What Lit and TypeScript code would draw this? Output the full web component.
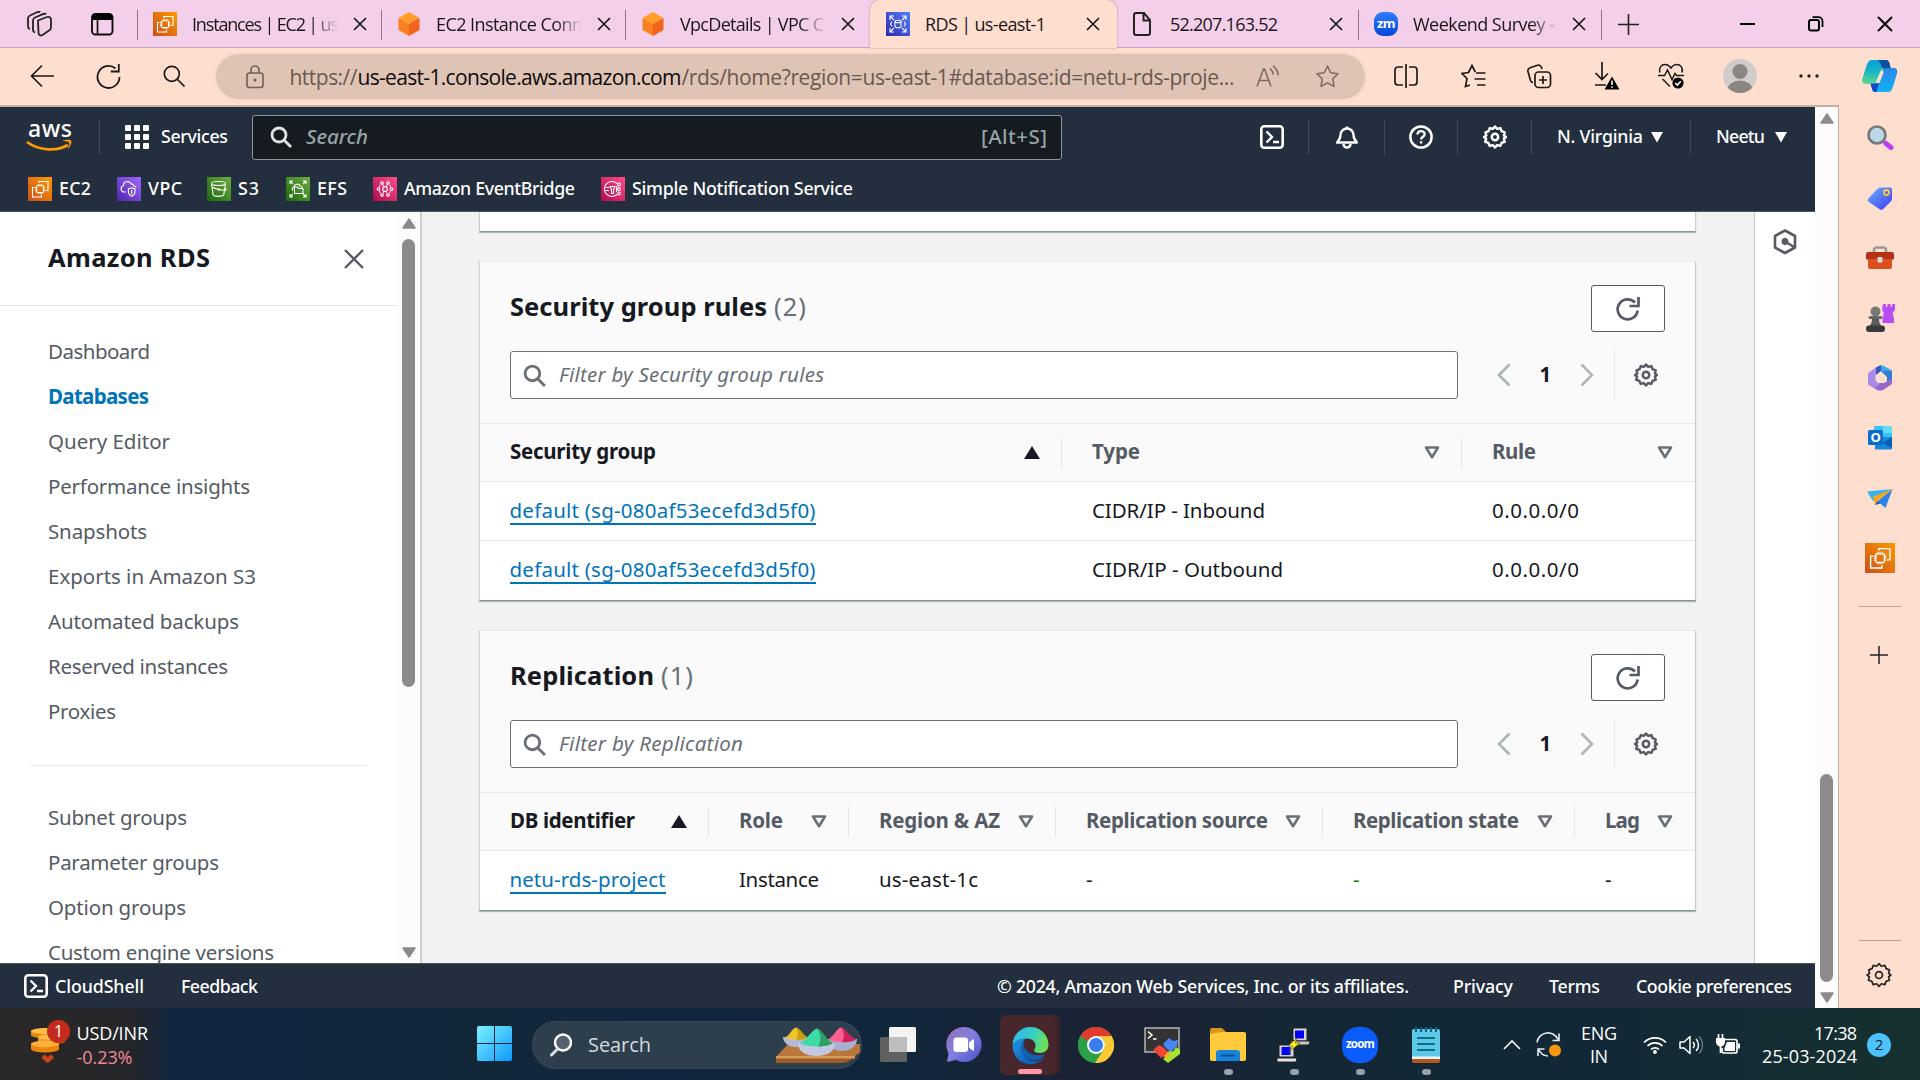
import { LitElement, html, css, svg, TemplateResult } from "lit";
import { customElement, property } from "lit/decorators.js";

/** A single line of text tracked so that it occupies exactly `w` pixels. */
@customElement("fit-text")
export class FitText extends LitElement {
  @property() text = "";
  @property({ type: Number }) w = 0;
  static styles = css`
    :host { display: inline-block; white-space: pre; flex: none; }
  `;
  updated() {
    const el = this.renderRoot.querySelector("span") as HTMLElement;
    el.style.letterSpacing = "0px";
    const natural = el.getBoundingClientRect().width;
    const n = Math.max(1, this.text.length - 1);
    el.style.letterSpacing = `${(this.w - natural) / n}px`;
    this.style.width = `${this.w}px`;
  }
  render() {
    return html`<span>${this.text}</span>`;
  }
}
const t = (text: string, w: number) => html`<fit-text .text=${text} .w=${w}></fit-text>`;

const icon = (w: number, h: number, body: TemplateResult, vb = `0 0 ${w} ${h}`) =>
  html`<svg class="ic" width=${w} height=${h} viewBox=${vb} fill="none">${body}</svg>`;

/* ---------- AWS service tiles ---------- */
const tile = (id: string, a: string, b: string, glyph: TemplateResult, s = 24) =>
  icon(s, s, svg`
    <defs><linearGradient id=${id} x1="0" y1="1" x2="1" y2="0"><stop offset="0" stop-color=${a}/><stop offset="1" stop-color=${b}/></linearGradient></defs>
    <rect width="24" height="24" fill="url(#${id})"/>
    <g stroke="#fff" stroke-width="1.1" fill="none">${glyph}</g>`, "0 0 24 24");
const ec2Glyph = svg`<path d="M11 6V4.500h9V13.500h-2.500M13.500 17.500v2.500H4.500v-9.500H6.500"/><rect x="8.700" y="8.700" width="6.800" height="6.800" rx=".6"/><path d="M10.500 8.500V7M12.100 8.500V7M13.800 8.500V7M10.500 17v-1.500M12.100 17v-1.500M13.800 17v-1.500M7 10.500h1.500M7 12.100h1.500M7 13.800h1.500M15.600 10.500h1.500M15.600 12.100h1.500M15.600 13.800h1.500" stroke-width=".9"/>`;
const ec2 = (id: string, s = 24) => tile(id, "#C8511B", "#FF9900", ec2Glyph, s);
const vpc = tile("gv", "#4D27AA", "#A166FF", svg`<path d="M8.800 15H7a3.200 3.200 0 0 1-.8-6.200 4.300 4.300 0 0 1 8.200-1.600c1-.7 2.500.2 2.300 1.600 1.300.2 2.200.8 2.600 1.700"/><path d="M14.700 10.800l3.300 1.200v3c0 2-1.300 3.200-3.300 4.200-2-1-3.300-2.200-3.300-4.200v-3zM14.700 13v4"/>`);
const s3 = tile("gs", "#1B660F", "#6CAE3E", svg`<ellipse cx="11.500" cy="6.500" rx="7" ry="2"/><path d="M4.500 6.500l1.700 11.500c1.500 1.800 9 1.800 10.500 0l1.800-11.500M5.200 10c2 1.500 5 2.300 8 2.800 3 .5 6 .8 6 0s-.7-1.300-1.500-1.800"/><circle cx="12" cy="12.500" r=".7"/>`);
const efs = tile("ge", "#1B660F", "#6CAE3E", svg`<path d="M4 7V4h3M4 4l3 3M20 7V4h-3M20 4l-3 3M4 17v3h3M4 20l3-3M20 17v3h-3M20 20l-3-3"/><path d="M8.500 16.500V10h3l1 1.500h4.500v5z"/><path d="M7 13.500c-1.500-1.500-.5-3.500 1-3.500.2-3 5-4 6-1 1.500-.3 2 1 2 2"/>`);
const eb = tile("gb", "#B0084D", "#FF4F8B", svg`<circle cx="12" cy="12" r="2.400"/><circle cx="9" cy="6" r="1.300"/><circle cx="15" cy="6" r="1.300"/><circle cx="9" cy="18" r="1.300"/><circle cx="15" cy="18" r="1.300"/><circle cx="18.500" cy="12" r="1.300"/><circle cx="5.500" cy="12" r="1.300"/><path d="M9.700 7.200l1.300 2.500M14.400 7.200l-1.300 2.500M9.700 16.800l1.300-2.500M14.400 16.800l-1.300-2.500M7.200 8l-1 2.500M16.800 8l1 2.500M6.300 13.500l1.200 2.800M17.800 13.500l-1.200 2.800" stroke-width=".9"/>`);
const sns = tile("gn", "#B0084D", "#FF4F8B", svg`<path d="M16 6.500a7.500 7.500 0 1 0 0 11"/><path d="M4.500 10.500H8M4.500 13.500H8M9 9.500h5l-1.500 3v4h-2v-4z"/><circle cx="18" cy="7.500" r="1.400"/><circle cx="18" cy="12" r="1.400"/><circle cx="18" cy="16.500" r="1.400"/><path d="M15 12h1.500M15.500 9v6"/>`);
const rds = tile("gr", "#2E27AD", "#527FFF", svg`<path d="M4 8V4h4M4.300 4.300L8 8M20 8V4h-4M19.700 4.300L16 8M4 16v4h4M4.300 19.700L8 16M20 16v4h-4M19.700 19.700L16 16"/><ellipse cx="12" cy="9.500" rx="3" ry="1.200"/><path d="M9 9.500v5c0 1.600 6 1.600 6 0v-5M6 9.500L4.500 12 6 14.500M18 9.500l1.500 2.500-1.500 2.500"/>`);

/* ---------- browser chrome ---------- */
const cube = icon(24, 24, svg`<path d="M12 0l10.500 6L12 12 1.500 6z" fill="#FF9D28"/><path d="M1.500 6L12 12v12L1.500 18z" fill="#F8801F"/><path d="M22.500 6L12 12v12l10.500-6z" fill="#F1641E"/>`);
const page = icon(24, 24, svg`<path d="M5 1h8l6 7v13a2 2 0 0 1-2 2H5a2 2 0 0 1-2-2V3a2 2 0 0 1 2-2zM12.500 1v7.500H19" stroke="#222" stroke-width="2"/>`);
const zm = html`<span class="zm">zm</span>`;
const cross = (s: number, c = "#111", sw = 1.6) => icon(s, s, svg`<path d="M1 1L${s - 1} ${s - 1}M${s - 1} 1L1 ${s - 1}" stroke=${c} stroke-width=${sw}/>`);
const star = "M11.500 1l3.200 6.800 7.300 1-5.300 5.200 1.300 7.400-6.500-3.600-6.500 3.600 1.300-7.400L1 8.800l7.300-1z";
const gear = (s: number, c: string, sw: number) =>
  icon(s, s, svg`<path d="M12 1.500l2.200 2.400 3.200-.8 1.200 3 3.100 1.200-.8 3.200L23 12l-2.100 1.600.8 3.200-3.100 1.100-1.200 3-3.200-.8L12 22.500l-2.200-2.400-3.200.8-1.200-3-3.100-1.100.8-3.200L1 12l2.300-1.500-.8-3.200 3.100-1.200 1.200-3 3 .8z" stroke=${c} stroke-width=${sw} stroke-linejoin="round"/><circle cx="12" cy="12" r="3.200" stroke=${c} stroke-width=${sw}/>`, "0 0 24 24");
const shell = icon(24, 24, svg`<rect x="1.300" y="1.300" width="21.400" height="21.400" rx="3" stroke="#fff" stroke-width="2.600"/><path d="M6.500 6.500L12 12l-5.500 5.500M13 17h6" stroke="#fff" stroke-width="2.400"/>`);
const lens = (s: number, c: string, sw: number) => icon(s, s, svg`<circle cx="9" cy="9" r="7" stroke=${c} stroke-width=${sw}/><path d="M14 14l7 7" stroke=${c} stroke-width=${sw}/>`, "0 0 22 22");

interface Tab { glyph: TemplateResult; title: string; w: number; fade?: boolean; active?: boolean; sep?: boolean; late?: boolean }
const tabs: Tab[] = [
  { glyph: ec2("t1"), title: "Instances | EC2 | us", w: 147, fade: true, sep: true },
  { glyph: cube, title: "EC2 Instance Conn", w: 147, fade: true, sep: true },
  { glyph: cube, title: "VpcDetails | VPC C", w: 144, fade: true, sep: true },
  { glyph: rds, title: "RDS | us-east-1", w: 121, active: true },
  { glyph: page, title: "52.207.163.52", w: 108, late: true },
  { glyph: zm, title: "Weekend Survey -", w: 142, fade: true, sep: true, late: true },
];

@customElement("browser-tabs")
export class BrowserTabs extends LitElement {
  static styles = css`
    :host { display: flex; height: 48px; background: #f3cfe9; box-shadow: inset 0 -1px #c7a4c0; font: 18px/24px "Open Sans", "Noto Sans", sans-serif; color: #1b171a; }
    .ic { display: block; flex: none; }
    .left { width: 137px; display: flex; align-items: center; padding-left: 27px; gap: 38px; box-sizing: border-box; }
    .tab { width: 244px; display: flex; align-items: center; position: relative; padding-left: 16px; box-sizing: border-box; }
    .tab.sep::before, .end::before { content: ""; position: absolute; left: 0; top: 10px; height: 30px; width: 1px; background: #8f7988; }
    .title { margin-left: 15px; width: 149px; margin-right: 12px; padding-bottom: 1px; }
    .fade { -webkit-mask-image: linear-gradient(90deg, #000 80%, transparent 98%); mask-image: linear-gradient(90deg, #000 80%, transparent 98%); }
    .active { background: #fedfcf; border-radius: 10px 10px 0 0; width: 247px; margin: 0 -2px 0 1px; z-index: 1; box-shadow: 0 0 2px #a4808f; }
    .late { width: 243px; }
    .late .title { width: 148px; margin-right: 11px; }
    .zm { width: 24px; height: 24px; border-radius: 9px; background: linear-gradient(#2f7bff, #0446d8); color: #fff; font: 700 13px/22px "Open Sans", sans-serif; text-align: center; letter-spacing: -0.500px; }
    .end { position: relative; flex: 1; display: flex; align-items: center; padding-left: 17px; }
    .win { margin-left: auto; display: flex; gap: 53px; padding-right: 27px; align-items: center; }
  `;
  render() {
    return html`
      <div class="left">
        ${icon(26, 26, svg`<path d="M11 9.500l9-3.500c2-.7 4 .6 4 2.500v8c0 1.500-.8 2.400-2 3l-6.500 4.500c-2 1.200-4-.1-4-2.200z" stroke="#222" stroke-width="1.800"/><path d="M8 21.500c-1.300-.4-2-1-2-2.500V9.500c0-1.500.8-2.500 2-3l8.500-3.700c1-.4 2-.2 2.700.4" stroke="#222" stroke-width="1.800"/><path d="M3 18c-1.300-.4-2-1-2-2.500V7.500c0-1.500.8-2.500 2-3L10.500 1c1-.4 2-.2 2.700.4" stroke="#222" stroke-width="1.800"/>`)}
        ${icon(23, 24, svg`<rect x="1" y="2" width="20.500" height="20.500" rx="3.500" stroke="#111" stroke-width="1.900"/><path d="M1 8V5a3.500 3.500 0 0 1 3.500-3.500h13.500A3.500 3.500 0 0 1 21.500 5v3z" fill="#000"/><path d="M6.500 8v14" stroke="#111" stroke-width="1.700"/>`)}
      </div>
      ${tabs.map((b) => html`
        <div class="tab ${b.sep ? "sep" : ""} ${b.active ? "active" : ""} ${b.late ? "late" : ""}">
          ${b.glyph}
          <div class="title ${b.fade ? "fade" : ""}">${t(b.title, b.w)}</div>
          ${cross(14)}
        </div>`)}
      <div class="end">
        ${icon(21, 21, svg`<path d="M10.500 0v21M0 10.500h21" stroke="#222" stroke-width="1.600"/>`)}
        <div class="win">
          ${icon(15, 15, svg`<path d="M0 7h15" stroke="#000" stroke-width="2"/>`)}
          ${icon(16, 16, svg`<rect x="1" y="4" width="10" height="10.500" rx="2" stroke="#000" stroke-width="2"/><path d="M4.500 1.200h6A4 4 0 0 1 14.500 5v6" stroke="#000" stroke-width="1.800"/>`)}
          ${cross(16, "#000", 1.900)}
        </div>
      </div>`;
  }
}

@customElement("browser-bar")
export class BrowserBar extends LitElement {
  static styles = css`
    :host { display: flex; align-items: center; height: 57px; background: #fedfcf; font: 21px/30px "Open Sans", "Noto Sans", sans-serif; color: #111; }
    .ic { display: block; flex: none; }
    .nav { width: 216px; padding-left: 30px; box-sizing: border-box; display: flex; gap: 42px; align-items: center; }
    .nav, .tools { margin-top: -1px; }
    .pill { width: 1149px; height: 45px; border-radius: 23px; background: #dfc4b6; box-shadow: 0 0 5px #f0cdbb; display: flex; align-items: center; padding: 0 26px 0 30px; box-sizing: border-box; color: #68594f; }
    .url { display: flex; margin-left: 25.500px; flex: 1; }
    .host { color: #0d0b0a; }
    .pill .gap { width: 36px; }
    .tools { display: flex; padding-left: 8px; flex: 1; }
    .tools > div { width: 66.800px; display: flex; justify-content: center; align-items: center; }
    .tools > .heart { width: 62px; }
    .tools > .who { width: 76px; }
    .tools > .more { width: 61px; }
    .avatar { width: 34px; height: 34px; border-radius: 50%; background: #cfccc9; overflow: hidden; }
    .copilot { margin-left: 7px; }
  `;
  render() {
    const s = "#1c1a19";
    return html`
      <div class="nav">
        ${icon(24, 24, svg`<path d="M24 12H1.500M12 1.500L1.500 12 12 22.500" stroke=${s} stroke-width="1.700"/>`)}
        ${icon(25, 25, svg`<path d="M23.500 13A11 11 0 1 1 19.500 4.500M22.800 0v7.500h-8" stroke=${s} stroke-width="1.800"/>`)}
        ${icon(22, 22, svg`<circle cx="8.800" cy="8.800" r="7.500" stroke=${s} stroke-width="1.700"/><path d="M14 14l7.500 7.500" stroke=${s} stroke-width="1.700"/>`)}
      </div>
      <div class="pill">
        ${icon(18, 24, svg`<rect x="1" y="8" width="16" height="14.500" rx="2.500" stroke="#6d5f57" stroke-width="1.600"/><path d="M5 8V5a4 4 0 0 1 8 0v3" stroke="#6d5f57" stroke-width="1.600"/><circle cx="9" cy="15" r="1.500" fill="#6d5f57"/>`)}
        <div class="url">
          ${t("https://", 68)}<span class="host">${t("us-east-1.console.aws.amazon.com", 324)}</span>${t("/rds/home?region=us-east-1#database:id=netu-rds-proje...", 553)}
        </div>
        ${icon(24, 24, svg`<path d="M1 21.500L7.500 4h1L15 21.500M3.300 15.500h9.500" stroke="#7a6b62" stroke-width="1.600"/><path d="M14 3.500a8 8 0 0 1 3 6M17 .8a12 12 0 0 1 5 9.500" stroke="#7a6b62" stroke-width="1.600"/>`)}
        <span class="gap"></span>
        ${icon(23, 23, svg`<path d=${star} stroke="#7a6b62" stroke-width="1.500" stroke-linejoin="round"/>`)}
      </div>
      <div class="tools">
        <div>${icon(24, 24, svg`<path d="M9 3H4a3 3 0 0 0-3 3v12a3 3 0 0 0 3 3h5M15 3h5a3 3 0 0 1 3 3v12a3 3 0 0 1-3 3h-5M12 0v24" stroke=${s} stroke-width="1.700"/>`)}</div>
        <div>${icon(25, 24, svg`<path d="M9 21l-4.500 1.500L6 14.500 1 9.500l6.500-1L11 1.500l3.300 6.500M15 9h9.500M13.500 15h11M16 21h8.500" stroke=${s} stroke-width="1.700"/>`)}</div>
        <div>${icon(25, 25, svg`<rect x="8" y="8" width="15.500" height="15.500" rx="3.500" stroke=${s} stroke-width="1.700"/><path d="M16 12v8M12 16h8M6 18.500c-1.500 0-2-.6-2.500-2L1 7.500c-.5-2 .2-3 2-3.700L10.500 1.200c2-.6 3 0 3.800 1.800l.7 2" stroke=${s} stroke-width="1.700"/>`)}</div>
        <div>${icon(26, 28, svg`<path d="M8 0v17M1.500 11L8 17.500 14 11.500M1 23h11" stroke=${s} stroke-width="1.700"/><path d="M18 14.500l7.500 13h-15z" fill="#000"/><path d="M18 18.500v4.500M18 24.300v1.500" stroke="#fff" stroke-width="1.500"/>`)}</div>
        <div class="heart">${icon(26, 26, svg`<path d="M1.800 9.500C.5 4.500 3.500 1.500 7 1.500c3 0 5 2 6 3.500 1-1.500 3-3.500 6-3.500s6.500 3 5 8M0 12.500h6.500l3-5.500 4.500 9.500 3-6 1.500 2H26M4.500 16l7.500 7.500" stroke=${s} stroke-width="1.500"/><circle cx="20" cy="20" r="5.600" fill="#000"/><path d="M17.300 20l2 2 3.500-3.800" stroke="#fff" stroke-width="1.600"/>`)}</div>
        <div class="who"><div class="avatar">${icon(34, 34, svg`<circle cx="17" cy="12.500" r="7.500" fill="#8b8682"/><ellipse cx="17" cy="31" rx="12.500" ry="9.500" fill="#8b8682"/>`)}</div></div>
        <div class="more">${icon(22, 6, svg`<circle cx="3" cy="3" r="1.700" fill="#222"/><circle cx="11" cy="3" r="1.700" fill="#222"/><circle cx="19" cy="3" r="1.700" fill="#222"/>`)}</div>
        <div class="copilot">${icon(36, 34, svg`
          <defs><linearGradient id="cp1" x1="0" y1="0" x2="0" y2="1"><stop offset="0" stop-color="#0a9fd8"/><stop offset=".5" stop-color="#19b6c4"/><stop offset="1" stop-color="#5fd98a"/></linearGradient>
          <linearGradient id="cp2" x1="0" y1="0" x2="0" y2="1"><stop offset="0" stop-color="#2a86e6"/><stop offset="1" stop-color="#12b3f5"/></linearGradient></defs>
          <path d="M10 1h14c2 0 3 1.500 3.500 3.500L29 10h-6c-3 0-4 1-5 3.500L15 22c-.8 2-2 3-4 3H4c-3 0-4.500-2-3.500-5.500l4-13C5.500 3 7 1 10 1z" fill="url(#cp1)"/>
          <path d="M16 1h8c2 0 3 1.500 3.500 3.500L29 10h-5c-3 0-4-1-5-4z" fill="#0c4f9c"/>
          <path d="M26 33H13c-2 0-2.500-1.500-3-3.500L8.500 24h4c3 0 4-1 5-3.500L20.500 12c.8-2 2-3 4-3h7c3 0 4.500 2 3.500 5.500l-4 13C30 31 29 33 26 33z" fill="url(#cp2)"/>
          <path d="M8.500 25h4c2.500 0 4-1 5-3.500l-3 11.500h-1.500c-2 0-2.500-1.500-3-3.500z" fill="#1747c9"/><path d="M18.500 12.500h3.500l-4.500 11.500h-4z" fill="#fedfcf"/>`)}</div>
      </div>`;
  }
}

/* ---------- scrollbars ---------- */
@customElement("scroll-track")
export class ScrollTrack extends LitElement {
  @property({ type: Number }) lead = 0;
  @property({ type: Number }) thumb = 0;
  static styles = css`
    :host { display: flex; flex-direction: column; align-items: center; width: 23px; background: #fcfcfc; padding: 6px 0 5px; box-sizing: border-box; flex: none; }
    .ic { display: block; flex: none; }
    .thumb { width: 13px; border-radius: 7px; background: #8b8b8b; flex: none; }
    .rest { flex: 1; }
  `;
  render() {
    return html`
      ${icon(14, 11, svg`<path d="M7 1l6 9H1z" fill="#8b8b8b" stroke="#8b8b8b" stroke-width="1.500" stroke-linejoin="round"/>`)}
      <div style="height:${this.lead}px;flex:none"></div>
      <div class="thumb" style="height:${this.thumb}px"></div>
      <div class="rest"></div>
      ${icon(14, 11, svg`<path d="M7 10l6-9H1z" fill="#8b8b8b" stroke="#8b8b8b" stroke-width="1.500" stroke-linejoin="round"/>`)}`;
  }
}

@customElement("aws-header")
export class AwsHeader extends LitElement {
  static styles = css`
    :host { display: block; height: 105px; background: #232f3e; color: #fff; font: 500 17.800px/24px "Noto Sans", "Open Sans", sans-serif; box-shadow: inset 0 -1px #4a5563; box-sizing: border-box; }
    .ic { display: block; flex: none; }
    fit-text { margin-bottom: 2px; }
    .top { display: flex; align-items: center; height: 60px; }
    .logo { width: 71px; padding-left: 28px; height: 34px; position: relative; }
    .logo b { display: block; font: 500 23px/17px "Noto Sans", sans-serif; height: 17px; }
    .logo .ic { position: absolute; left: 26px; top: 19px; }
    .sep { width: 1px; height: 34px; background: #414b58; flex: none; }
    .services { display: flex; align-items: center; gap: 12px; padding-left: 25px; width: 127px; }
    .search { width: 810px; height: 45px; box-sizing: border-box; background: #161a21; border: 1px solid #8a9999; border-radius: 3px; display: flex; align-items: center; padding: 0 14px 0 17px; color: #95a5a6; font-size: 20.500px; }
    .search i { margin-left: 14px; flex: 1; }
    .right { margin-left: auto; display: flex; align-items: center; height: 60px; }
    .cell { display: flex; align-items: center; justify-content: center; width: 72px; box-sizing: border-box; }
    .cell.first { width: 73px; }
    .cell.bell { width: 75px; }
    .cell.cog { width: 73px; }
    .cell.loc { width: 158px; justify-content: flex-start; padding-left: 25px; gap: 8px; }
    .cell.user { width: 124px; justify-content: flex-start; padding-left: 25px; gap: 10px; }
    .favs { display: flex; align-items: center; height: 42px; padding: 1px 0 0 28px; }
    .fav { display: flex; align-items: center; gap: 7px; }
  `;
  render() {
    const down = icon(12, 12, svg`<path d="M0 1h12L6 11.500z" fill="#fff"/>`);
    const favs: [TemplateResult, string, number, number][] = [
      [ec2("f1"), "EC2", 32, 89], [vpc, "VPC", 34, 90], [s3, "S3", 21, 79],
      [efs, "EFS", 30, 87], [eb, "Amazon EventBridge", 171, 228], [sns, "Simple Notification Service", 221, 300],
    ];
    return html`
      <div class="top">
        <div class="logo"><b>${t("aws", 44)}</b>
          ${icon(48, 14, svg`<path d="M1 3c12 9 30 9.500 41 3" stroke="#ff9900" stroke-width="2.800"/><path d="M36 2c4-2 8-1.500 9-.5s0 6-3.500 9c2-4 2-6 1.500-7s-4-1.500-7-1.500z" fill="#ff9900"/>`)}
        </div>
        <div class="sep"></div>
        <div class="services">
          ${icon(24, 24, svg`${[0, 9, 18].map((x) => [0, 9, 18].map((y) => svg`<rect x=${x} y=${y} width="6" height="6" rx="1" fill="#fff"/>`))}`)}
          ${t("Services", 67)}
        </div>
        <div class="search">${lens(22, "#dfe3e3", 2.8)}<i>${t("Search", 62)}</i>${t("[Alt+S]", 66)}</div>
        <div class="right">
          <div class="cell first">${shell}</div><div class="sep"></div>
          <div class="cell bell">${icon(24, 24, svg`<path d="M12 1.500v2M2 17.500c3-3 3.500-5 3.500-7.500a6.500 6.500 0 0 1 13 0c0 2.500.5 4.500 3.500 7.500z" stroke="#fff" stroke-width="2.400" stroke-linejoin="round"/><path d="M8.500 19a3.500 3.500 0 0 0 7 0" stroke="#fff" stroke-width="2.600"/>`)}</div><div class="sep"></div>
          <div class="cell">${icon(24, 24, svg`<circle cx="12" cy="12" r="10.600" stroke="#fff" stroke-width="2.500"/><path d="M8.500 9.500c0-4.500 7.200-4.500 7.200-.3 0 2.500-3.600 2.600-3.600 5.200M12.100 16.200v2.300" stroke="#fff" stroke-width="2.400"/>`)}</div><div class="sep"></div>
          <div class="cell cog">${gear(24, "#fff", 2.5)}</div><div class="sep"></div>
          <div class="cell loc">${t("N. Virginia", 86)}${down}</div><div class="sep"></div>
          <div class="cell user">${t("Neetu", 49)}${down}</div>
        </div>
      </div>
      <div class="favs">
        ${favs.map(([g, name, w, cell]) => html`<div class="fav" style="width:${cell}px">${g}${t(name, w)}</div>`)}
      </div>`;
  }
}

@customElement("side-nav")
export class SideNav extends LitElement {
  static styles = css`
    :host { display: flex; width: 422px; box-sizing: border-box; border-right: 2px solid #cbcfd0; background: #fff; overflow: hidden; flex: none; font: 20.500px/45px "Noto Sans", "Open Sans", sans-serif; color: #545b64; }
    .ic { display: block; flex: none; }
    .body { width: 397px; }
    .head { height: 94px; box-sizing: border-box; border-bottom: 1px solid #e3e8e8; display: flex; align-items: center; justify-content: space-between; padding: 0 33px 0 48px; font-weight: 700; font-size: 25.500px; color: #16191f; }
    .head fit-text { margin-bottom: 3px; }
    .list { padding: 23px 0 0 48px; }
    .item { height: 45px; }
    .on { color: #0073bb; font-weight: 700; }
    .rule { height: 1px; background: #e7e9ea; margin: 31px 30px 5px; }
    .list.second { padding-top: 24px; }
  `;
  render() {
    const a: [string, number][] = [["Dashboard", 102], ["Databases", 101], ["Query Editor", 122], ["Performance insights", 202], ["Snapshots", 99], ["Exports in Amazon S3", 208], ["Automated backups", 191], ["Reserved instances", 180], ["Proxies", 68]];
    const b: [string, number][] = [["Subnet groups", 139], ["Parameter groups", 171], ["Option groups", 138], ["Custom engine versions", 226]];
    const row = ([s, w]: [string, number]) => html`<div class="item ${s === "Databases" ? "on" : ""}">${t(s, w)}</div>`;
    return html`
      <div class="body">
        <div class="head">${t("Amazon RDS", 162)}${cross(20, "#545b64", 2.4)}</div>
        <div class="list">${a.map(row)}</div>
        <div class="rule"></div>
        <div class="list second">${b.map(row)}</div>
      </div>
      <scroll-track lead="10" thumb="448"></scroll-track>`;
  }
}

interface Col { name: string; w: number }
interface Cell { text: string; w: number; kind?: "link" | "ok" }

@customElement("data-card")
export class DataCard extends LitElement {
  @property() heading = "";
  @property({ type: Number }) hw = 0;
  @property() count = "";
  @property({ attribute: false }) filter: [string, number] = ["", 0];
  @property({ attribute: false }) cols: Col[] = [];
  @property({ attribute: false }) rows: Cell[][] = [];
  @property() template = "";
  static styles = css`
    :host { display: block; background: #fff; border: 1px solid #e4e8e8; border-left-color: #d0d5d5; border-right-color: #c5cbcb; border-bottom: 1px solid #879596; box-shadow: 0 1px 1px #aab7b8; box-sizing: border-box; width: 1217px; font: 20.500px/28px "Noto Sans", "Open Sans", sans-serif; color: #16191f; }
    .ic { display: block; flex: none; }
    .top { background: #fafafa; height: 162px; box-sizing: border-box; border-bottom: 1px solid #e6e9e9; padding: 23px 30px 0; }
    .title { display: flex; align-items: center; height: 47px; font-size: 25.500px; font-weight: 700; gap: 7px; line-height: 34px; }
    .title .n { color: #687078; font-weight: 400; flex: 1; }
    .title > fit-text, .title .n { margin-bottom: 5px; }
    .btn { width: 74px; height: 47px; box-sizing: border-box; border: 1px solid #545b64; border-radius: 3px; background: #fff; display: flex; align-items: center; justify-content: center; }
    .tools { display: flex; align-items: center; margin-top: 19px; height: 48px; }
    .filter { width: 948px; height: 48px; box-sizing: border-box; border: 1px solid #687078; border-radius: 3px; background: #fff; display: flex; align-items: center; gap: 13px; padding-left: 12px; color: #687078; font-style: italic; }
    .filter fit-text, .pager fit-text { margin-bottom: 2px; }
    .pager { display: flex; align-items: center; padding-left: 39px; gap: 28.500px; font-weight: 700; }
    .sep { width: 1px; background: #e3e6e6; height: 48px; margin: 0 19px 0 20px; }
    .head, .row { display: grid; }
    .head { height: 58px; background: #fafafa; box-sizing: border-box; border-bottom: 1px solid #e6e9e9; font-weight: 700; color: #545b64; align-items: center; }
    .head > div { height: 30px; display: flex; align-items: center; justify-content: space-between; padding: 0 21px 0 30px; border-left: 1px solid #e3e6e6; box-sizing: border-box; }
    .head > div:first-child { border-left-color: transparent; color: #16191f; padding-left: 29px; }
    .head > div:last-child { padding-right: 22px; }
    .head fit-text { margin-bottom: 3px; }
    .row { height: 59px; align-items: center; }
    .row:not(:last-child) { height: 58px; }
    .row + .row { border-top: 1px solid #e6e9e9; }
    .row > div { padding: 0 0 3px 31px; }
    .row > div:first-child { padding-left: 29.500px; }
    .link { color: #0073bb; border-bottom: 2px solid #0073bb; display: inline-block; line-height: 25px; height: 25px; vertical-align: middle; }
    .ok { color: #1d8102; }
  `;
  render() {
    const up = icon(16, 13, svg`<path d="M8 0l8 13H0z" fill="#16191f"/>`);
    const dn = icon(16, 13, svg`<path d="M2 1.500h12L8 11.200z" stroke="#687078" stroke-width="2.600" stroke-linejoin="round"/>`);
    const grid = `grid-template-columns:${this.template}`;
    return html`
      <div class="top">
        <div class="title">${t(this.heading, this.hw)}<span class="n">${t(this.count, 32)}</span>
          <div class="btn">${icon(26, 26, svg`<path d="M22.600 14.500A10 10 0 1 1 20 6.500" stroke="#545b64" stroke-width="2.700"/><path d="M23.500 1v9h-9" stroke="#545b64" stroke-width="2.700"/>`)}</div>
        </div>
        <div class="tools">
          <div class="filter">${lens(23, "#687078", 2.7)}${t(this.filter[0], this.filter[1])}</div>
          <div class="pager">
            ${icon(14, 24, svg`<path d="M12.500 1.500L2 12l10.500 10.500" stroke="#aab7b8" stroke-width="2.600"/>`)}
            ${t("1", 12)}
            ${icon(14, 24, svg`<path d="M1.500 1.500L12 12 1.500 22.500" stroke="#aab7b8" stroke-width="2.600"/>`)}
          </div>
          <div class="sep"></div>
          ${gear(24, "#545b64", 2.5)}
        </div>
      </div>
      <div class="head" style=${grid}>
        ${this.cols.map((c, i) => html`<div>${t(c.name, c.w)}${i ? dn : up}</div>`)}
      </div>
      ${this.rows.map((r) => html`<div class="row" style=${grid}>
        ${r.map((c) => html`<div><span class=${c.kind ?? ""}>${t(c.text, c.w)}</span></div>`)}
      </div>`)}`;
  }
}

@customElement("edge-sidebar")
export class EdgeSidebar extends LitElement {
  static styles = css`
    :host { display: flex; flex-direction: column; align-items: center; width: 81px; box-sizing: border-box; background: #fedfcf; flex: none; padding-top: 3px; }
    .ic { display: block; }
    .slot { height: 60px; display: flex; align-items: center; }
    .rule { width: 42px; height: 1px; background: #b9a396; }
    .rule.upper { margin-top: 18px; }
    .plus { height: 96px; display: flex; align-items: center; padding-right: 2px; }
    .gap { flex: 1; }
    .gear { height: 67px; display: flex; align-items: center; padding-right: 1px; }
    .o { font: 700 13px "Open Sans", sans-serif; fill: #fff; }
  `;
  render() {
    const icons = [
      icon(28, 26, svg`<circle cx="11" cy="10" r="8.500" fill="#bcd8e8" stroke="#777" stroke-width="2.600"/><path d="M17.500 17l3 2.500" stroke="#777" stroke-width="2.500"/><path d="M20 18.500l5 4" stroke="#c13cf5" stroke-width="5" stroke-linecap="round"/>`),
      icon(26, 26, svg`<defs><linearGradient id="tg" x1="0" y1="0" x2="1" y2="1"><stop offset="0" stop-color="#6fb0ff"/><stop offset="1" stop-color="#3a3cf0"/></linearGradient></defs><path d="M12 2h11c1.300 0 2 .8 2 2v9c0 1-.3 2-1 2.800l-8 8c-1 1-2.500 1-3.500 0l-11-7.500c-1-1-1-2.500 0-3.500l8-8.500c.7-.8 1.500-1.300 2.500-1.300z" transform="translate(0 .5)" fill="url(#tg)"/><circle cx="19.500" cy="7.500" r="2.500" fill="#5a6fe0" stroke="#ffc93c" stroke-width="1.800"/>`),
      icon(30, 24, svg`<path d="M9 7V4c0-1.500 1-2.500 2.500-2.500h7C20 1.500 21 2.500 21 4v3" stroke="#999" stroke-width="2.600"/><rect x="1" y="6" width="28" height="8" rx="2" fill="#b33314"/><path d="M3 13h24v8a2 2 0 0 1-2 2H5a2 2 0 0 1-2-2z" fill="#d9501c"/><rect x="12.500" y="11" width="5" height="5.500" rx="1" fill="#d8d8d8"/>`),
      icon(30, 30, svg`<path d="M18 1h2.800v2.500h1.700V1h3v2.500h1.700V1H30v6l-2.300 3 1.300 6v4H17.500v-4l1.300-6L17 7z" fill="#b94df5"/><circle cx="10.500" cy="8.500" r="5" fill="#777"/><rect x="3.500" y="13" width="14" height="3" rx="1.500" fill="#6a6a6a"/><path d="M7 15.500h7c0 4 1 6 3 8H4c2-2 3-4 3-8z" fill="#5a5a5a"/><rect x="1" y="22.500" width="19" height="6.500" rx="3" fill="#3a3a3a"/>`),
      icon(26, 26, svg`<path d="M9 2.500L13 .5h3l9 5v9l-6-4.500-5-4z" fill="#3fa3ea"/><path d="M25 6v12l-5 3v-9l-6-6z" fill="#2f7fd0"/><path d="M25 13.500V19l-9 6c-2 .8-4 .8-6 0l-6-4 4-3h9z" fill="#9667cc"/><path d="M10 25L1 19.500V8l8-5.500v11c0 3 2 5 4 5l-4 3.500z" fill="#a98ce8"/><path d="M9 2.500L14 0v6l-5 4z" fill="#3457b8"/><path d="M13 8l4.500 2.500v5L13 18l-4.500-2.500v-5z" fill="#fedfcf"/>`),
      icon(26, 26, svg`<rect x="7" y="1" width="18" height="12" rx="1.500" fill="#37c2f1"/><rect x="16" y="1" width="9" height="7" fill="#66dcfb"/><path d="M8 12h17v11a1.500 1.500 0 0 1-1.500 1.500H8z" fill="#1688dd"/><path d="M25 12v11l-9-5z" fill="#0a5fb0"/><rect x="1" y="5" width="15" height="15" rx="1.500" fill="#0b6fc9"/><text class="o" x="3.500" y="17.300">O</text>`),
      icon(26, 22, svg`<path d="M0 4.500L25.500 2 14 8.500 6 14z" fill="#31b4f2"/><path d="M25.500 2L18.500 21l-8-7z" fill="#2b82ea"/><path d="M25.500 2L6 9.500l2 8.500 3-4z" fill="#f5a623"/><path d="M8 18l2.500-4 3.500 2.600z" fill="#1b5fb8"/>`),
      ec2("sb", 30),
    ];
    return html`
      ${icons.map((i) => html`<div class="slot">${i}</div>`)}
      <div class="rule upper"></div>
      <div class="plus">${icon(18, 18, svg`<path d="M9 0v18M0 9h18" stroke="#222" stroke-width="1.500"/>`)}</div>
      <div class="gap"></div>
      <div class="rule"></div>
      <div class="gear">${gear(26, "#2a2523", 1.6)}</div>`;
  }
}

@customElement("task-bar")
export class TaskBar extends LitElement {
  static styles = css`
    :host { display: flex; height: 72px; align-items: center; background: linear-gradient(90deg, #2a2727 0, #252629 130px, #13263f 170px, #12263e 380px, #122838 480px, #10263e 640px, #12263a 900px, #1c2233 1130px, #132735 1300px, #122836 1600px, #16302f 1920px); color: #fff; font: 18px/24px "Open Sans", "Noto Sans", sans-serif; }
    .ic { display: block; flex: none; }
    .weather { width: 461px; display: flex; padding-left: 30px; box-sizing: border-box; position: relative; }
    .weather .txt { margin-left: 6.500px; display: flex; flex-direction: column; padding-top: 2px; }
    .red { color: #f08a98; }
    .badge { position: absolute; left: 47px; top: 1px; width: 23px; height: 23px; border-radius: 50%; background: #c42b1c; text-align: center; font-size: 16px; line-height: 22px; }
    .start { width: 71px; display: flex; padding-left: 16px; box-sizing: border-box; }
    .search { width: 330px; height: 48px; border-radius: 24px; margin-top: 2px; background: #2d3e4d; box-shadow: inset 0 0 0 1px #364655; display: flex; align-items: center; padding-left: 18px; box-sizing: border-box; font-size: 20px; color: #d5d9dc; overflow: hidden; }
    .search fit-text { margin: 0 125px 0 16px; }
    .app { width: 66px; height: 60px; display: flex; justify-content: center; align-items: center; position: relative; z-index: 0; }
    .apps { display: flex; padding: 2px 0 0 3px; }
    .run::after { content: ""; position: absolute; bottom: 0; width: 9px; height: 6px; border-radius: 3px; background: #98a0a8; }
    .cur::before { content: ""; position: absolute; inset: 0 3px; border-radius: 6px; background: #47272c; box-shadow: inset -4px 0 #3a2229; z-index: -1; }
    .cur::after { width: 24px; height: 5px; background: #ff99a4; bottom: 1px; }
    .zoom { width: 36px; height: 36px; border-radius: 16px; background: #0b5cff; font: 700 11.500px/34px "Open Sans", sans-serif; text-align: center; letter-spacing: -0.800px; }
    .tray { margin-left: auto; display: flex; align-items: center; padding-top: 2px; }
    .col { display: flex; flex-direction: column; align-items: center; line-height: 23px; }
    .tray .chev { margin-right: 15px; }
    .clock { align-items: flex-end; margin-top: -1px; }
    .tray .lang { margin: 0 26px 0 19px; }
    .tray .sys { display: flex; gap: 12px; margin-right: 21px; }
    .two { width: 24px; height: 24px; border-radius: 50%; background: #4cc2ff; color: #0b1a26; font-size: 15px; text-align: center; margin: 0 29px 0 10px; line-height: 23px; }
  `;
  render() {
    return html`
      <div class="weather">
        ${icon(40, 48, svg`
          <path d="M1 12v4a13 3.200 0 0 0 27 0v-4z" fill="#e8890f"/><ellipse cx="14.500" cy="12" rx="13.500" ry="3" fill="#ffbe45"/>
          <path d="M8 18v4a13 3.200 0 0 0 27 0v-4z" fill="#f09a20"/><ellipse cx="21.500" cy="18" rx="13.500" ry="3" fill="#ffb84a"/>
          <path d="M1 25v5a14 3.500 0 0 0 28 0v-5z" fill="#ea840c"/><ellipse cx="15" cy="25" rx="14" ry="3.200" fill="#ffb03a"/>
          <path d="M13 37l4.700 4.300L22.500 37" stroke="#cf4317" stroke-width="4.500" stroke-linejoin="round"/>`)}
        <span class="badge">1</span>
        <div class="txt">${t("USD/INR", 71.5)}<span class="red">${t("-0.23%", 56)}</span></div>
      </div>
      <div class="start">${icon(36, 36, svg`<defs><linearGradient id="wn" gradientUnits="userSpaceOnUse" x1="0" y1="0" x2="36" y2="36"><stop offset="0" stop-color="#7df2ff"/><stop offset="1" stop-color="#0a95ff"/></linearGradient></defs><path d="M0 2a2 2 0 0 1 2-2h15v17H0zM18 0h15a2 2 0 0 1 2 2v15H18zM0 18h17v17H2a2 2 0 0 1-2-2zM18 18h17v15a2 2 0 0 1-2 2H18z" fill="url(#wn)"/>`)}</div>
      <div class="search">
        ${icon(22, 24, svg`<circle cx="13" cy="9.500" r="8" stroke="#fff" stroke-width="2.400" fill="#53626e"/><path d="M7.500 16L1.500 22" stroke="#dfe3e6" stroke-width="3" stroke-linecap="round"/>`)}
        ${t("Search", 63)}
        ${icon(84, 37, svg`
          <path d="M12 17h72v8l-6 5H0z" fill="#b9773b"/><path d="M0 29h79c-3 4-7 6.500-12 7H0z" fill="#9c5c28"/><path d="M0 29h79v2.500H0z" fill="#d79a58"/>
          <path d="M7 10h26c0 6-6 10-13 10S7 16 7 10z" fill="#b4b9d6"/><path d="M9 10.500c5-2 7-9.500 11-10 4 .5 7 8 12 10-4 3-19 3-23 0z" fill="#edc52b"/><path d="M20 .5c4 .5 7 8 12 10-3 2-8 2.300-12 2.300 3-4 2-9 0-12.300z" fill="#c99d12"/>
          <path d="M51 12h30c0 7-6 12-15 12s-15-5-15-12z" fill="#a9afd0"/><path d="M52 12.500c5-2 9-11.500 13-12 4 .5 9 10 15 12-5 3.500-23 3.500-28 0z" fill="#ff5f93"/><path d="M65 .5c4 .5 9 10 15 12-4 2.500-9 2.700-14 2.700 3-5 2-11-1-14.700z" fill="#cf1f5c"/>
          <path d="M22 16h37c0 8-7 13-18.500 13S22 24 22 16z" fill="#c3c8e2"/><path d="M24 16c7-2.500 12-14 17-14.500C46 2 50 13.500 57 16c-5 4.500-28 4.500-33 0z" fill="#3ddba6"/><path d="M41 1.500C46 2 50 13.500 57 16c-4 3-10 3.400-15 3.400 4-6 3-13-1-17.900z" fill="#2f9f60"/>`)}
      </div>
      <div class="apps">
        <div class="app">${icon(36, 36, svg`<rect x="0" y="10" width="27" height="25" rx="1.500" fill="#616161"/><rect x="9" y="0" width="27" height="25" rx="1.500" fill="#f4f4f4"/><path d="M9 10h18v15H9z" fill="#bdbdbd"/>`)}</div>
        <div class="app">${icon(36, 36, svg`<defs><linearGradient id="ch" x1="0" y1="0" x2="1" y2="1"><stop offset="0" stop-color="#9a6fb8"/><stop offset=".5" stop-color="#7f7fe0"/><stop offset="1" stop-color="#4a4cc8"/></linearGradient></defs><path d="M18 0a17.500 17.500 0 1 1-8 33L1 35l1.500-9A17.500 17.500 0 0 1 18 0z" fill="url(#ch)"/><rect x="7.500" y="10.500" width="14.500" height="14.500" rx="3" fill="#fff"/><path d="M23.500 15.500l4-3v11l-4-3z" fill="#fff" stroke="#fff" stroke-linejoin="round"/>`)}</div>
        <div class="app run cur">${icon(37, 37, svg`<defs><linearGradient id="e1" x1="0" y1="0" x2="1" y2=".3"><stop offset="0" stop-color="#2fb4ef"/><stop offset=".6" stop-color="#35d0c4"/><stop offset="1" stop-color="#6be05a"/></linearGradient><linearGradient id="e2" x1="0" y1="0" x2="1" y2="1"><stop offset="0" stop-color="#1d96e4"/><stop offset="1" stop-color="#0b4fa8"/></linearGradient></defs>
          <path d="M.5 18A18 18 0 0 1 36.500 18c0 5-4 8-8.500 8-4 0-6-1-6-2.500 0-1 1.500-2 1.500-5 0-4-3.500-7-9-7C8 11.500 2.500 14 .5 18z" fill="url(#e1)"/>
          <path d="M.5 18.500C2 14 8 11 14 11.500c-3 2-5 6-4.500 10.500.7 7 6.500 12 13 12 3.500 0 7-1 10-3.500A18 18 0 0 1 .5 18.500z" fill="url(#e2)"/>
          <path d="M14 11.500c-3.500 2.500-2.500 9 1 12.500 4 4 11 5.500 18.500 3-3 5-8 6-11.500 6-6.500 0-12-4.500-12.500-11 0-5 1.500-8 4.500-10.500z" fill="#0f5fb5"/>`)}</div>
        <div class="app">${icon(36, 36, svg`<circle cx="18" cy="18" r="18" fill="#2aa148"/><path d="M2.400 9A18 18 0 0 1 33.600 9H18a9 9 0 0 0-8 5z" fill="#e33b2e"/><path d="M2.400 9l7.800 13.500A9 9 0 0 0 18 27l-4 8.500A18 18 0 0 1 2.400 9z" fill="#2aa148"/><path d="M33.600 9A18 18 0 0 1 17 36l8.800-13.500A9 9 0 0 0 18 9z" fill="#fcc934"/><circle cx="18" cy="18" r="9" fill="#fff"/><circle cx="18" cy="18" r="7" fill="#3b7ded"/>`)}</div>
        <div class="app">${icon(37, 36, svg`<rect x="1" y="1" width="34" height="24" fill="#333" stroke="#b5b5b5" stroke-width="1.500"/><path d="M4 4.500l4 3.500-4 3.500M9 12h3.500" stroke="#fff" stroke-width="1.600"/><path d="M19 17l6-6 4 3 5-1-1 6-6 6-4-3-2-2z" fill="#4a86f7"/><path d="M9 23l6-5 4 2 5 5-3 4-4 2z" fill="#f0453a"/><path d="M21 30l5-6 3 1 3-5 4 3v4L24 36l-5-4z" fill="#a6e22e"/><path d="M20 29l4-4 2 3-4 4z" fill="#f5b51e"/>`)}</div>
        <div class="app run">${icon(37, 34, svg`<path d="M0 2a2 2 0 0 1 2-2h10l4 4h-4l-2 4H0z" fill="#d9961a"/><path d="M0 6l12-2h22a2 2 0 0 1 2 2v25a2 2 0 0 1-2 2H2a2 2 0 0 1-2-2z" fill="#ffcb3d"/><path d="M6 33V25a3 3 0 0 1 3-3h18a3 3 0 0 1 3 3v8z" fill="#1683d8"/><path d="M11 27.500h14" stroke="#0b4f9c" stroke-width="2"/>`)}</div>
        <div class="app run">${icon(36, 36, svg`<rect x="17" y="1" width="14" height="13" fill="#d6d6d6" stroke="#222"/><rect x="19" y="3.500" width="9" height="8" fill="#0000f5"/><path d="M15 14h19l-1 4H15z" fill="#c8c8c8" stroke="#222"/><rect x="3" y="18" width="15" height="12" fill="#d6d6d6" stroke="#222"/><rect x="5.500" y="20" width="9" height="8" fill="#0000f5"/><path d="M1 31h20l-1 4H1z" fill="#e4e4e4" stroke="#222"/><path d="M21 11l-9 8h5l-4 6 11-9h-5z" fill="#ffef1f" stroke="#5a5200" stroke-width=".6"/>`)}</div>
        <div class="app run"><span class="zoom">zoom</span></div>
        <div class="app run">${icon(30, 36, svg`<rect x="1" y="2" width="28" height="30" rx="2" fill="#5cc8e4"/><path d="M1 30h28v4a2 2 0 0 1-2 2H3a2 2 0 0 1-2-2z" fill="#b8561a"/><path d="M1 29.500h28v2.500H1z" fill="#e9f6fa"/><path d="M6 11h18M6 17h18M6 23h18" stroke="#0e6f92" stroke-width="2"/><path d="M5 0v5M10 0v5M15 0v5M20 0v5M25 0v5" stroke="#0e5f80" stroke-width="2"/>`)}</div>
      </div>
      <div class="tray">
        <span class="chev">${icon(18, 10, svg`<path d="M1 9l8-8 8 8" stroke="#fff" stroke-width="1.600"/>`)}</span>
        ${icon(26, 26, svg`<path d="M1 10.500A11 11 0 0 1 22 7.500M23 1.500v7h-6.500M12 24A11 11 0 0 1 2.500 17M2 24v-7h6.500" stroke="#e6e9eb" stroke-width="1.600"/><circle cx="19" cy="18.500" r="6" fill="#f7950a"/>`)}
        <div class="col lang">${t("ENG", 36)}${t("IN", 18)}</div>
        <div class="sys">
          ${icon(24, 24, svg`<path d="M1 9.500a15.500 15.500 0 0 1 22 0M4.500 13a10.500 10.500 0 0 1 15 0M8 16.500a5.700 5.700 0 0 1 8 0" stroke="#fff" stroke-width="1.700"/><circle cx="12" cy="19" r="1.900" fill="#fff"/>`)}
          ${icon(24, 24, svg`<path d="M1 9h4l6-5.500v17L5 15H1z" stroke="#fff" stroke-width="1.500" stroke-linejoin="round"/><path d="M14 9a4.500 4.500 0 0 1 0 6M17 6a8.500 8.500 0 0 1 0 12" stroke="#fff" stroke-width="1.500"/><path d="M20 3.500a12 12 0 0 1 0 17" stroke="#667682" stroke-width="1.500"/>`)}
          ${icon(26, 24, svg`<path d="M8.500 6.500H20a2 2 0 0 1 2 2V18a2 2 0 0 1-2 2H9a2 2 0 0 1-2-2v-3" stroke="#fff" stroke-width="1.700"/><path d="M12 9h8v9H9.500v-3z" fill="#fff"/><path d="M23 10.500h2v5h-2zM1 5h9v4a4.500 4.500 0 0 1-9 0z" fill="#fff"/><path d="M3.500 5V1M7.500 5V1M5.500 13v7" stroke="#fff" stroke-width="1.700"/>`)}
        </div>
        <div class="col clock">${t("17:38", 43)}${t("25-03-2024", 95)}</div>
        <span class="two">2</span>
      </div>`;
  }
}

@customElement("app-root")
export class AppRoot extends LitElement {
  static styles = css`
    :host { display: flex; flex-direction: column; width: 1920px; height: 1080px; overflow: hidden; background: #fedfcf; }
    .ic { display: block; flex: none; }
    .view { display: flex; flex: 1; min-height: 0; }
    .frame { display: flex; border-top: 2px solid #c9ada0; border-right: 1px solid #c9ada0; width: 1839px; box-sizing: border-box; flex: none; }
    .page { width: 1815px; display: flex; flex-direction: column; }
    .middle { flex: 1; display: flex; min-height: 0; overflow: hidden; }
    .main { flex: 1; background: #f1f3f3; padding-left: 57px; overflow: hidden; display: flex; flex-direction: column; gap: 29px; }
    .stub { height: 20px; width: 1217px; box-sizing: border-box; background: #fff; flex: none; border: 1px solid #c9cfcf; border-top: 0; border-bottom: 1px solid #879596; box-shadow: 0 1px 1px #aab7b8; }
    .help { width: 61px; box-sizing: border-box; border-left: 1px solid #c4c9ca; background: #fff; padding: 17px 0 0 18px; flex: none; }
    .foot { height: 45px; background: #232f3e; box-shadow: inset 0 1px #4a5563; display: flex; align-items: center; color: #fff; font: 500 17.800px/24px "Noto Sans", "Open Sans", sans-serif; padding: 0 23px 0 24px; flex: none; box-sizing: border-box; }
    .cs { display: flex; gap: 7px; align-items: center; margin-right: 37px; }
    .legal { margin-left: auto; display: flex; }
    .legal > :nth-child(1) { margin-right: 44px; }
    .legal > :nth-child(2), .legal > :nth-child(3) { margin-right: 36px; }
  `;
  render() {
    const sg: Cell = { text: "default (sg-080af53ecefd3d5f0)", w: 306, kind: "link" };
    return html`
      <browser-tabs></browser-tabs>
      <browser-bar></browser-bar>
      <div class="view">
        <div class="frame">
          <div class="page">
            <aws-header></aws-header>
            <div class="middle">
              <side-nav></side-nav>
              <div class="main">
                <div class="stub"></div>
                <data-card heading="Security group rules" .hw=${257} count="(2)" .filter=${["Filter by Security group rules", 265]}
                  template="581px 400px 1fr"
                  .cols=${[{ name: "Security group", w: 146 }, { name: "Type", w: 48 }, { name: "Rule", w: 44 }]}
                  .rows=${[
                    [sg, { text: "CIDR/IP - Inbound", w: 173 }, { text: "0.0.0.0/0", w: 87 }],
                    [sg, { text: "CIDR/IP - Outbound", w: 191 }, { text: "0.0.0.0/0", w: 87 }],
                  ]}></data-card>
                <data-card heading="Replication" .hw=${144} count="(1)" .filter=${["Filter by Replication", 184]}
                  template="228px 140px 207px 267px 252px 1fr"
                  .cols=${[{ name: "DB identifier", w: 125 }, { name: "Role", w: 44 }, { name: "Region & AZ", w: 121 }, { name: "Replication source", w: 182 }, { name: "Replication state", w: 166 }, { name: "Lag", w: 35 }]}
                  .rows=${[[
                    { text: "netu-rds-project", w: 156, kind: "link" }, { text: "Instance", w: 80 }, { text: "us-east-1c", w: 99 },
                    { text: "-", w: 8 }, { text: "-", w: 8, kind: "ok" }, { text: "-", w: 8 },
                  ]]}></data-card>
              </div>
              <div class="help">${icon(24, 26, svg`<path d="M12 1.500l10 5.500v11.500L12 24 2 18.500V7z" stroke="#545b64" stroke-width="2.600" stroke-linejoin="round"/><circle cx="12" cy="12.500" r="3.400" fill="#545b64"/><path d="M12 12.500l9 5.500" stroke="#545b64" stroke-width="2.600"/>`)}</div>
            </div>
            <div class="foot">
              <div class="cs">${shell}${t("CloudShell", 89)}</div>
              ${t("Feedback", 77)}
              <div class="legal">${t("© 2024, Amazon Web Services, Inc. or its affiliates.", 412)}${t("Privacy", 60)}${t("Terms", 51)}${t("Cookie preferences", 156)}</div>
            </div>
          </div>
          <scroll-track lead="650" thumb="208"></scroll-track>
        </div>
        <edge-sidebar></edge-sidebar>
      </div>
      <task-bar></task-bar>`;
  }
}
